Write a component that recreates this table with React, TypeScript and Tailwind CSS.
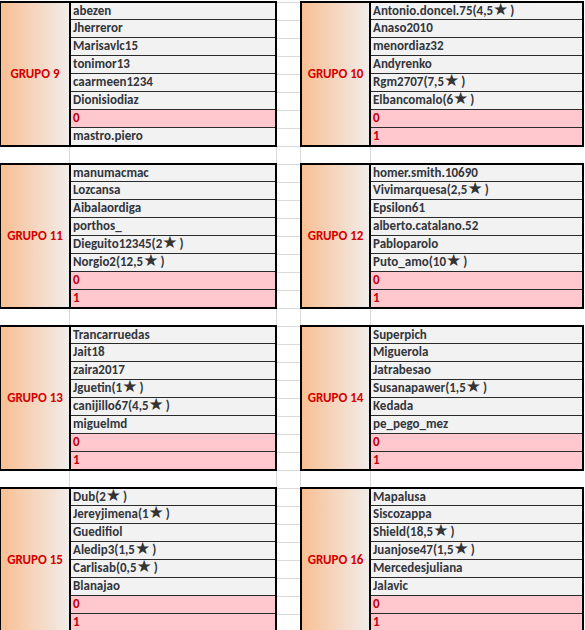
const groups: { n: number; rows: string[] }[] = [
  { n: 9, rows: ['abezen', 'Jherreror', 'Marisavlc15', 'tonimor13', 'caarmeen1234', 'Dionisiodiaz', '0', 'mastro.piero'] },
  { n: 10, rows: ['Antonio.doncel.75(4,5)', 'Anaso2010', 'menordiaz32', 'Andyrenko', 'Rgm2707(7,5)', 'Elbancomalo(6)', '0', '1'] },
  { n: 11, rows: ['manumacmac', 'Lozcansa', 'Aibalaordiga', 'porthos_', 'Dieguito12345(2)', 'Norgio2(12,5)', '0', '1'] },
  { n: 12, rows: ['homer.smith.10690', 'Vivimarquesa(2,5)', 'Epsilon61', 'alberto.catalano.52', 'Pabloparolo', 'Puto_amo(10)', '0', '1'] },
  { n: 13, rows: ['Trancarruedas', 'Jait18', 'zaira2017', 'Jguetin(1)', 'canijillo67(4,5)', 'miguelmd', '0', '1'] },
  { n: 14, rows: ['Superpich', 'Miguerola', 'Jatrabesao', 'Susanapawer(1,5)', 'Kedada', 'pe_pego_mez', '0', '1'] },
  { n: 15, rows: ['Dub(2)', 'Jereyjimena(1)', 'Guedifiol', 'Aledip3(1,5)', 'Carlisab(0,5)', 'Blanajao', '0', '1'] },
  { n: 16, rows: ['Mapalusa', 'Siscozappa', 'Shield(18,5)', 'Juanjose47(1,5)', 'Mercedesjuliana', 'Jalavic', '0', '1'] },
];

function Cell({ text, first }: { text: string; first: boolean }) {
  const pink = text === '0' || text === '1';
  const m = text.match(/^(.*)\((.+)\)$/);
  return (
    <div
      className={`${first ? 'h-[16px]' : 'h-[18px] border-t border-[#2b2b2b]'} pl-[2px] leading-[16px] font-bold text-[13px] whitespace-nowrap ${
        pink ? 'bg-[#ffc7ce] text-[#bf0010]' : 'bg-[#f2f2f2] text-[#33363c]'
      }`}
    >
      {m ? (
        <>
          {m[1]}({m[2]}
          <span className="inline-block font-['DejaVu_Sans'] text-[17px] leading-[12px] text-[#333]">★</span>
          <span className="ml-[2px]">)</span>
        </>
      ) : (
        text
      )}
    </div>
  );
}

function Block({ g, left }: { g: { n: number; rows: string[] }; left: boolean }) {
  return (
    <div className={`flex h-[146px] border-2 border-black ${left ? 'w-[278px]' : 'w-[284px]'}`}>
      <div
        className={`${left ? 'w-[70px]' : 'w-[69px]'} shrink-0 border-r-2 border-black bg-gradient-to-r from-[#f8bf93] to-[#f0ece9] flex items-center justify-center text-[#d40000] font-bold text-[13px]`}
      >
        GRUPO {g.n}
      </div>
      <div className="flex-1 flex flex-col">
        {g.rows.map((r, i) => (
          <Cell key={i} text={r} first={i === 0} />
        ))}
      </div>
    </div>
  );
}

function Gap({ left }: { left: boolean }) {
  return left ? (
    <div className="h-[16px] flex">
      <div className="w-[71px] border-r border-[#d9d9d9]" />
      <div className="w-[207px] border-r border-[#d9d9d9]" />
    </div>
  ) : (
    <div className="h-[16px] flex border-l border-[#d9d9d9]">
      <div className="w-[70px] border-r border-[#d9d9d9]" />
      <div className="flex-1" />
    </div>
  );
}

export default function App() {
  const leftGroups = groups.filter((_, i) => i % 2 === 0);
  const rightGroups = groups.filter((_, i) => i % 2 === 1);

  return (
    <div className="w-[585px] h-[630px] overflow-hidden bg-white font-['Carlito','Calibri','Lato',sans-serif]">
      <div className="flex pt-[1px]">
        <div className="flex flex-col ml-[-1px] shrink-0">
          {leftGroups.map((g, i) => (
            <div key={g.n}>
              {i > 0 && <Gap left />}
              <Block g={g} left />
            </div>
          ))}
        </div>
        <div className="w-[23px] shrink-0 flex flex-col pt-[1px]">
          {Array.from({ length: 36 }).map((_, i) => (
            <div key={i} className="h-[18px] border-t border-[#dadada] shrink-0" />
          ))}
        </div>
        <div className="flex flex-col shrink-0">
          {rightGroups.map((g, i) => (
            <div key={g.n}>
              {i > 0 && <Gap left={false} />}
              <Block g={g} left={false} />
            </div>
          ))}
        </div>
      </div>
    </div>
  );
}
